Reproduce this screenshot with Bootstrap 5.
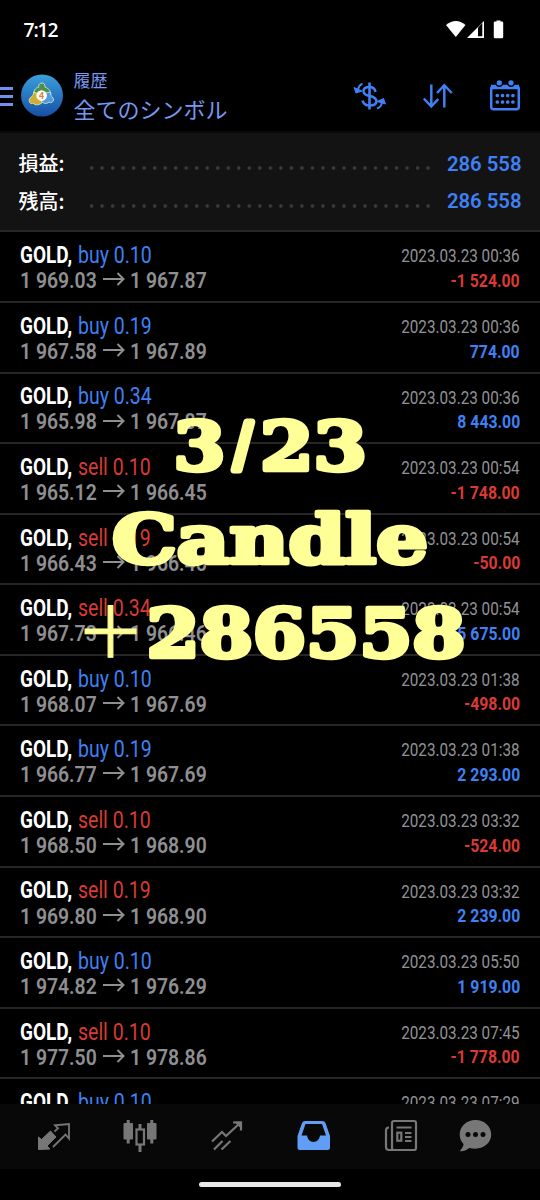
<!DOCTYPE html>
<html lang="ja">
<head>
<meta charset="utf-8">
<meta name="viewport" content="width=device-width, initial-scale=1">
<title>履歴</title>
<link href="https://cdn.jsdelivr.net/npm/bootstrap@5.3.0/dist/css/bootstrap.min.css" rel="stylesheet">
<style>
body{background:#000;color:#fff;font-family:Roboto,"Noto Sans CJK JP",sans-serif;line-height:1}
.phone{width:540px;height:1200px}
.status{height:60px;padding:0 35px 0 23.5px}
.clock{font-family:"Open Sans",sans-serif;font-size:19.3px;font-weight:600;letter-spacing:-1.1px}
.topbar{height:71px}
.peri{color:#7898f0}
.ttl{margin-left:9.5px}
.ttl .t1{font-size:17px;line-height:24px;margin-top:1px}
.ttl .t2{font-size:22px;line-height:35px}
.summary{height:99.4px;background:#131313;border-top:2px solid #0a0a0a;padding:12px 18.5px 0 18.5px}
.sumline{height:37.6px;font-size:20.3px;font-weight:600}
.sumline .lbl{width:70px;font-size:20px;line-height:22px;padding-bottom:1px;font-family:"Noto Sans CJK JP",sans-serif;font-weight:500}
.dots{height:4px;width:344px;background:radial-gradient(circle at 2.6px 2px,#3b3b3b 1.4px,transparent 2.1px) 0 0/10.53px 4px repeat-x;margin-top:9px}
.blue{color:#3f80f4}.red{color:#d93a34}
.rows{height:873.6px}
.deal{height:70.58px;border-top:2px solid #262626;padding:10px 20px 0;white-space:nowrap}
.fit{display:inline-block;transform:scaleX(var(--sx));transform-origin:left center}
.fit.r{transform-origin:right center}
.sym{width:57.5px}
.sym .fit{font-size:23.3px;font-weight:700;--sx:.815}
.act .fit{font-size:23.3px;--sx:.836}
.line1{height:27px}.line2{height:22px}
.price .fit{font-size:22.2px;font-weight:600;--sx:.873}
.price{color:#8f8f92;width:82px}
.dt{color:#929295;padding-top:2px}.dt .fit{font-size:18.9px;--sx:.808}
.val{padding-top:2px}.val .fit{font-size:18.9px;font-weight:700;--sx:.836}
.tabs{height:65px;background:#080808;color:#777}
.home{height:31px}
.pill{width:142px;height:5.4px;border-radius:3px;background:#e8e8e8}
.caption{left:0;top:400px;pointer-events:none}
</style>
</head>
<body>
<main class="phone position-relative overflow-hidden d-flex flex-column">
<header class="status d-flex align-items-center justify-content-between flex-shrink-0">
<span class="clock">7:12</span>
<svg width="60" height="20" viewBox="445 20 60 20" fill="#fff"><path d="M446 25Q456 17 465.500 25L455.800 37Z"/><path d="M467 38L484 21V38Z"/><path d="M478 27.500L482.300 23V36.200H478Z" fill="#000"/><path d="M495 21.500h1.500V20.500h4V21.500h1.500q1.200 0 1.200 1.200V37q0 1.200-1.200 1.200h-7q-1.200 0-1.200-1.200V22.700q0-1.200 1.200-1.200z"/></svg>
</header>
<nav class="topbar d-flex flex-shrink-0">
<svg width="64" height="71" viewBox="0 60 64 71">
<defs><linearGradient id="lg" x1="0" y1="0" x2="0" y2="1"><stop stop-color="#3a9fdd"/><stop offset="1" stop-color="#174fa5"/></linearGradient></defs>
<path d="M0 88.500H13M0 96.500H13M0 104.500H13" stroke="#6f92ee" stroke-width="2.800"/>
<circle cx="42" cy="95.500" r="21" fill="url(#lg)"/>
<g stroke="#e2eecf" stroke-width=".8"><path d="M42 83c-3 0-4 3-3 4-4 1-6 4-5 8l5 4h6l6-5c-1-4-2-5-6-7 0-3-1-4-3-4z" fill="#4e8f4d"/><path d="M34 92c-1 3-1 4-4 6-2 3 0 7 3 5 2 3 7 2 10-1l-2-7z" fill="#cfae2f"/><path d="M50 92c1 3 1 4 3 6 2 3-2 6-4 4-3 3-6 1-8-1l1-7z" fill="#4f9ddf"/></g>
<circle cx="41.600" cy="95.600" r="5.300" fill="#fff"/><text x="41.600" y="99" text-anchor="middle" font-family="Roboto" font-size="9.500" font-weight="700" fill="#e9803a">4</text></svg>
<div class="ttl peri d-flex flex-column pt-2"><span class="t1">履歴</span><span class="t2">全てのシンボル</span></div>
<svg class="ms-auto" width="190" height="71" viewBox="350 59.500 190 71" fill="none" stroke="#3f80f4" stroke-width="2.500">
<path d="M369.500 82V109" stroke-width="2.600"/><path d="M375.500 91.500Q375 87 370 86.500Q363 86.500 363.500 91Q364 94.500 370 95.500Q376.500 97 376.500 101Q376 105 370 105Q363.500 105 362.500 100"/>
<path d="M362.500 83.200Q359 84.500 358 89" stroke-width="2"/><path d="M354 87L362 90.500L356 92.500Z" fill="#3f80f4" stroke-width="1"/>
<path d="M377 108Q381.500 106.500 382 101.500" stroke-width="2"/><path d="M377 101L383.500 98L385.500 103.500Z" fill="#3f80f4" stroke-width="1"/>
<path d="M431.300 84V106M423.800 98L431.300 106L438.300 98.500M444.300 107V85M437 92.500L444.300 84.700L451.800 92.500"/>
<rect x="491.200" y="86" width="27.600" height="22.800" rx="2.500"/><path d="M491 86.500H519" stroke-width="4.500"/>
<g stroke="#000" stroke-width="1.500" fill="#3f80f4"><circle cx="499.300" cy="82.300" r="3.400"/><circle cx="511" cy="82.300" r="3.400"/></g>
<path d="M497.300 95h17M497.300 101.500h17" stroke-width="3.700" stroke-linecap="round" stroke-dasharray="0 5.200"/></svg>
</nav>
<section class="summary flex-shrink-0">
<div class="sumline d-flex align-items-center"><span class="lbl">損益:</span><span class="dots"></span><span class="blue ms-auto">286 558</span></div>
<div class="sumline d-flex align-items-center"><span class="lbl">残高:</span><span class="dots"></span><span class="blue ms-auto">286 558</span></div>
</section>
<section id="rows" class="rows overflow-hidden flex-shrink-0"></section>
<footer class="tabs flex-shrink-0">
<svg width="540" height="65" viewBox="0 1104 540 65" fill="none" stroke="#777" stroke-width="2.200">
<path d="M38.500 1149.500V1137L41.500 1139.500L50.500 1131L56 1137L47 1146L50 1149Z" fill="#777" stroke-width="1"/><path d="M54.500 1131L58 1127.800L55 1124.800L69 1123.500V1138L65.500 1134L53 1146.500" transform="translate(0 .5)" stroke-width="1.800"/>
<g fill="#777" stroke="none"><rect x="123.500" y="1123" width="9.500" height="16.500" rx="1"/><rect x="147" y="1123" width="9.500" height="16.500" rx="1"/></g><path d="M128.200 1120V1143.500M151.800 1120V1143.500M140 1124V1130M140 1145V1152" stroke-width="3"/><rect x="136.500" y="1129.500" width="7.500" height="15"/>
<path d="M212 1141.500L222 1132L226 1136L240 1123M233 1122.500H241V1130.500M214 1149.500L222.500 1141M221.500 1149.500L230.500 1141" /><path d="M234 1121.500H242V1129.500Z" fill="#777" stroke="none"/>
<path fill-rule="evenodd" stroke="none" fill="#619cf5" d="M305 1121H322.500Q324.500 1121 325.500 1123L330 1136V1147.500Q330 1150 327.500 1150H300Q297.500 1150 297.500 1147.500V1136L302 1123Q303 1121 305 1121ZM305.500 1124L301.500 1135.500H307Q308 1142 313.500 1142Q319 1142 320 1135.500H326L322 1124Z"/>
<rect x="392" y="1121" width="24" height="29" rx="2"/><path d="M389 1127.500Q386 1127.500 386 1130.500V1147Q386 1150 389 1150H394M396.500 1127.500H411.500M405 1133H411.500M405 1137H411.500M405 1141H411.500"/><rect x="397.300" y="1132.700" width="4" height="8"/>
<path fill="#777" stroke="none" d="M475.500 1120C466 1120 459.700 1127 459.700 1134.500C459.700 1139 461.500 1142 463.500 1144C463.500 1147.500 460.500 1149.500 460 1151.200C464 1151.500 467.500 1149.500 469.500 1148C483 1151 491.200 1143 491.200 1134.500C491.200 1127 485 1120 475.500 1120Z"/><g fill="#080808" stroke="none"><circle cx="468" cy="1134.500" r="2.500"/><circle cx="475.500" cy="1134.500" r="2.500"/><circle cx="483" cy="1134.500" r="2.500"/></g></svg>
</footer>
<div class="home d-flex justify-content-center align-items-center"><div class="pill"></div></div>
<svg class="caption position-absolute" width="540" height="280" viewBox="0 400 540 280" fill="#ffff98" stroke="#ffff98" stroke-width="4.500" stroke-linejoin="round" font-family="DejaVu Serif, serif" font-weight="700" font-size="67">
<text y="469.500"><tspan x="173.500" textLength="52" lengthAdjust="spacingAndGlyphs">3</tspan><tspan x="234" y="469" font-family="Liberation Sans" font-weight="400" font-size="64" stroke-width="7">/</tspan><tspan x="260" y="469.500" textLength="107" lengthAdjust="spacingAndGlyphs">23</tspan></text>
<text x="112" y="562.500" textLength="316" lengthAdjust="spacingAndGlyphs">Candle</text>
<text x="75.500" y="657.500" font-family="Noto Sans CJK JP" font-weight="400" font-size="70" stroke-width="1">＋</text>
<text x="146.500" y="656.500" textLength="319" lengthAdjust="spacingAndGlyphs">286558</text></svg>
</main>
<script>
const deals=[
["buy","0.10","1 969.03","1 967.87","00:36","-1 524.00"],
["buy","0.19","1 967.58","1 967.89","00:36","774.00"],
["buy","0.34","1 965.98","1 967.87","00:36","8 443.00"],
["sell","0.10","1 965.12","1 966.45","00:54","-1 748.00"],
["sell","0.19","1 966.43","1 966.45","00:54","-50.00"],
["sell","0.34","1 967.73","1 966.46","00:54","5 675.00"],
["buy","0.10","1 968.07","1 967.69","01:38","-498.00"],
["buy","0.19","1 966.77","1 967.69","01:38","2 293.00"],
["sell","0.10","1 968.50","1 968.90","03:32","-524.00"],
["sell","0.19","1 969.80","1 968.90","03:32","2 239.00"],
["buy","0.10","1 974.82","1 976.29","05:50","1 919.00"],
["sell","0.10","1 977.50","1 978.86","07:45","-1 778.00"],
["buy","0.10","","","07:29",""]];
document.getElementById("rows").innerHTML=deals.map(([side,lot,from,to,time,val])=>`
<article class="deal">
<div class="line1 d-flex align-items-center"><div class="sym"><span class="fit">GOLD,</span></div><div class="act ${side==="buy"?"blue":"red"}"><span class="fit">${side} ${lot}</span></div><div class="dt ms-auto"><span class="fit r">2023.03.23 ${time}</span></div></div>
<div class="line2 d-flex align-items-center"><div class="price"><span class="fit">${from}</span></div><svg width="28" height="18" fill="none" stroke="#8f8f92" stroke-width="2"><path d="M1 8H21.500M15.500 2L21.500 8L15.500 14"/></svg><div class="price"><span class="fit">${to}</span></div><div class="val ms-auto ${val[0]==="-"?"red":"blue"}"><span class="fit r">${val}</span></div></div>
</article>`).join("");
</script>
<script src="https://cdn.jsdelivr.net/npm/bootstrap@5.3.0/dist/js/bootstrap.bundle.min.js"></script>
</body>
</html>
